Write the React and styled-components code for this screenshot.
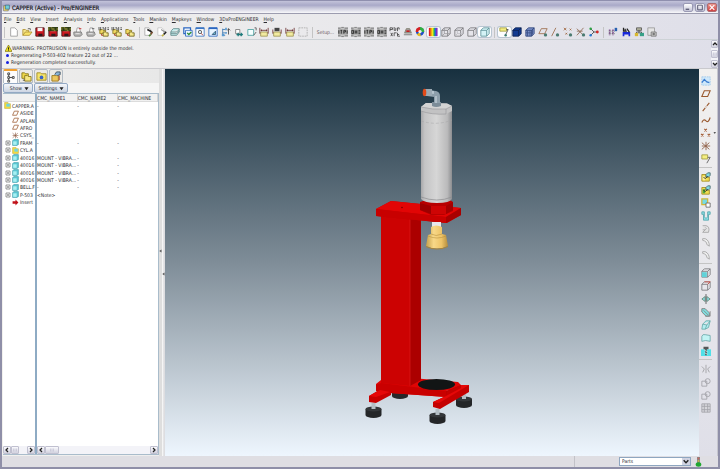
import React, { useState } from 'react'
import styled, { createGlobalStyle } from 'styled-components'


const GlobalStyle = createGlobalStyle`
  * {
    box-sizing: border-box;
  }

  html, body, #root {
    height: 100%;
    margin: 0;
  }

  body, button, select, table {
    font-family: 'DejaVu Sans Condensed', 'Liberation Sans', sans-serif;
    font-size: 5px;
    line-height: 7px;
    color: #2c2c30;
  }

  button {
    margin: 0;
    padding: 0;
    border: 0;
    background: none;
    cursor: pointer;
  }
`;

const Frame = styled.div`
  display: flex;
  flex-direction: column;
  height: 100vh;
  overflow: hidden;
  background: linear-gradient(90deg, #f2f1ee, #dfdfe9);
  border: solid #8f8fa8;
  border-width: 0 2px 2px;
`;

const TitleBar = styled.header`
  display: flex;
  align-items: center;
  flex: none;
  gap: 2px;
  height: 14px;
  padding: 1px 1px 0 1px;
  border-top: 1px solid #8f8fae;
  border-bottom: 1px solid #9c9caf;
  background: linear-gradient(#c3c3da, #a9a9c8 35%, #d0d0e0 65%, #f8f8fb);

  h1 {
    flex: 1;
    margin: 0;
    font-size: 6px;
    line-height: 8px;
    font-weight: 400;
    color: #1c1c26;
    -webkit-text-stroke: 0.2px #1c1c26;
  }
`;

const WindowBtn = styled.button`
  display: flex;
  width: 10px;
  height: 9px;
  border-radius: 2px;
  border: 1px solid ${({ close }) => close ? '#b06a6e' : '#9a9ab4'};
  background: ${({ close }) => close ? 'linear-gradient(#ec9a92, #cf3f3f)' : 'linear-gradient(#fff, #c3c3d6)'};

  svg {
    width: 100%;
    height: 100%;
  }
`;

const MenuBar = styled.nav`
  display: flex;
  flex: none;
  align-items: center;
  gap: 5px;
  height: 11px;
  padding: 0 2px;

  button {
    white-space: nowrap;
  }
`;

const ToolBar = styled.div`
  display: flex;
  flex: none;
  align-items: center;
  gap: 2px;
  height: 15px;
  padding-left: 1px;
  border-bottom: 1px solid #cdd2d6;
`;

const ToolGroup = styled.div`
  display: flex;
  flex-direction: ${({ vertical }) => vertical ? 'column' : 'row'};
  ${({ vertical }) => vertical ? 'height' : 'width'}: ${({ size }) => size}px;
`;

const ToolBtn = styled.button`
  display: flex;
  flex: 1;
  align-items: center;
  justify-content: center;
  min-width: 0;
  min-height: 0;
  border-radius: 2px;
  ${({ active }) => active && `
    background: #fdfdfe;
    box-shadow: 0 0 0 1px #b9c6d2;
  `}

  svg {
    flex: none;
    width: 10px;
    height: 10px;
    overflow: visible;
  }
`;

const Divider = styled.span`
  flex: none;
  width: ${({ vertical }) => vertical ? 'auto' : '1px'};
  height: ${({ vertical }) => vertical ? '1px' : '11px'};
  margin: ${({ vertical }) => vertical ? '2px 0' : '0 1px'};
  background: #c4c4c4;
`;

const SetupBtn = styled.button`
  width: 19px;
  color: #6a5560;
  text-align: center;
`;

const Messages = styled.section`
  display: flex;
  flex: none;
  justify-content: space-between;
  height: 29px;
  border-bottom: 1px solid #c9c9cd;

  ul {
    margin: 0;
    padding: 5px 0 0 3px;
    list-style: none;
  }

  li {
    display: flex;
    align-items: center;
    height: 7px;
    gap: 2px;
    white-space: nowrap;
  }

  li:first-child {
    gap: 0;
  }

  li i {
    width: 3px;
    height: 3px;
    margin-left: 1px;
    border-radius: 50%;
    background: #1620e0;
  }

  li svg {
    width: 7px;
    height: 7px;
  }
`;

const Scroll = styled.div`
  display: flex;
  flex: none;
  flex-direction: ${({ vertical }) => vertical ? 'column' : 'row'};
  justify-content: space-between;
  width: ${({ vertical }) => vertical ? '7px' : 'auto'};
  height: ${({ vertical }) => vertical ? 'auto' : '8px'};
  background: #f3f3f8;
`;

const ScrollBtn = styled.button`
  display: flex;
  align-items: center;
  justify-content: center;
  width: ${({ wide }) => wide ? '14px' : '8px'};
  height: 8px;
  border: 1px solid #c0c0d0;
  border-radius: 1px;
  background: linear-gradient(#fafafd, #d2d2df);

  ${({ narrow }) => narrow && 'width: 7px;'}

  svg {
    flex: none;
    width: 6px;
    height: 6px;
  }
`;

const ScrollStart = styled.div`
  display: flex;
`;

const Main = styled.main`
  display: flex;
  flex: 1;
  min-height: 0;
`;

const Navigator = styled.aside`
  display: flex;
  flex: none;
  flex-direction: column;
  width: 157px;
  padding: 0 0 1px 1px;
`;

const Tabs = styled.div`
  display: flex;
  flex: none;
  height: 14px;
  gap: 1px;
  background: linear-gradient(90deg, #efeeec, #e8e8e8);
`;

const Tab = styled.button`
  display: flex;
  align-items: center;
  justify-content: center;
  width: ${({ active }) => active ? '15px' : '14px'};
  border: 1px solid #b4bcc4;
  border-top: ${({ active }) => active ? '2px solid #f0a030' : '1px solid #b4bcc4'};
  border-bottom: ${({ active }) => active ? '0' : '1px solid #b4bcc4'};
  border-radius: 2px 2px 0 0;
  background: ${({ active }) => active ? '#fdfdfd' : '#eceae6'};

  svg {
    width: 11px;
    height: 11px;
  }
`;

const TreeTools = styled.div`
  display: flex;
  flex: none;
  gap: 1px;
  height: 10px;
  background: #f5f5f5;
`;

const TreeMenuBtn = styled.button`
  display: flex;
  align-items: center;
  justify-content: flex-end;
  gap: 2px;
  width: ${({ wide }) => wide ? '34px' : '30px'};
  padding-right: 3px;
  border: 1px solid #93a9c4;
  border-radius: 2px;
  background: linear-gradient(#f4f6fa, #cdd5e3);

  svg {
    width: 5px;
    height: 5px;
  }
`;

const TreePanes = styled.div`
  display: flex;
  flex: 1;
  min-height: 0;
  background: #fff;
  border: 1px solid #a9bccb;
  border-left: 0;
`;

const Pane = styled.div`
  display: flex;
  flex-direction: column;
  justify-content: space-between;
  flex: ${({ grow }) => grow ? '1' : 'none'};
  width: ${({ grow }) => grow ? 'auto' : '34px'};
  min-width: 0;
  border-right: ${({ grow }) => grow ? '0' : '2px solid #8eabc4'};
`;

const TreeHead = styled.div`
  height: 8px;
  background: #f1f1f1;
  border-bottom: 1px solid #dcdcdc;
`;

const TreeList = styled.ul`
  display: grid;
  grid-auto-rows: 1fr;
  height: 104px;
  margin: 0;
  padding: 0;
  list-style: none;
`;

const TreeRow = styled.li`
  display: flex;
  align-items: center;
  gap: 1px;
  min-height: 0;
  line-height: 6px;
  padding-left: ${({ root }) => root ? '1px' : '2px'};
  white-space: nowrap;

  svg {
    flex: none;
    width: 7px;
    height: 7px;
  }

  svg.toggle {
    width: 6px;
    height: 6px;
  }
`;

const ModelTable = styled.table`
  width: 100%;
  height: 112px;
  table-layout: fixed;
  border-collapse: collapse;

  th {
    height: 8px;
    padding: 0;
    text-align: left;
    font-weight: 400;
    background: #f1f1f1;
    border-right: 1px solid #d4d4d4;
    box-shadow: inset 0 -1px #dcdcdc;
  }

  td {
    padding: 0;
    white-space: nowrap;
    line-height: 6px;
  }
`;

const Splitter = styled.div`
  display: flex;
  flex: none;
  flex-direction: column;
  justify-content: center;
  gap: 19px;
  width: 6px;
  background: linear-gradient(90deg, #dedede 50%, #fafafa 60%, #dddde0 80%);

  svg {
    width: 3px;
    height: 4px;
  }

  svg:last-child {
    align-self: flex-end;
  }
`;

const Viewport = styled.div`
  flex: 1;
  min-width: 0;
  background: linear-gradient(#17303f, #7f8d98 50%, #eef6fe);

  svg {
    display: block;
    width: 100%;
    height: 100%;
  }
`;

const SideBar = styled.div`
  display: flex;
  flex: none;
  flex-direction: column;
  width: 19px;
  padding: 5px 5px 0 0;
  border-right: 1px solid #c6c6ce;
  background: linear-gradient(#f1f0ef, #dfdfe8);
`;

const StatusBar = styled.footer`
  display: flex;
  flex: none;
  align-items: center;
  justify-content: flex-end;
  gap: 4px;
  height: 11px;
  padding-right: 16px;
  background: #dfdee3;

  svg {
    width: 7px;
    height: 10px;
  }
`;

const StatusGap = styled.span`
  width: 41px;
  height: 11px;
  border-left: 1px solid #c2c2c8;
`;

const FilterBox = styled.div`
  position: relative;
  width: 72px;
  height: 9px;

  select {
    display: block;
    width: 100%;
    height: 100%;
    padding: 0 2px;
    appearance: none;
    border: 1px solid #8ea6c0;
    border-radius: 0;
    background: #fff;
  }

  svg {
    position: absolute;
    top: 1px;
    right: 1px;
    width: 8px;
    height: 7px;
    background: #d0d3e2;
    pointer-events: none;
  }
`;


// small drawings, all on a 12 x 12 grid
const cube = (fill, line) => (
  <>
    <path d="M1 4 4 1H11V8L8 11H1Z" fill={fill} />
    <path d="M1 4H8V11H1ZM1 4 4 1H11L8 4M11 1V8L8 11" fill="none" stroke={line} />
  </>
)
const wireCube = (inner) => (
  <g fill="none" stroke="#77777b">
    <path d="M1 4H8V11H1ZM1 4 4 1H11L8 4M11 1V8L8 11" />
    {inner && <path d="M4 1V8H11M4 8 1 11" stroke={inner} />}
  </g>
)
const floppy = (label) => (
  <>
    <path d="M1 1H11V11H1Z" fill="#d01820" stroke="#401014" />
    <path d="M3 1H9V5H3Z" fill="#f4f4f4" />
    <path d="M4 8H9V11H4Z" fill="#30181c" />
    {label && <path d="M0 0H12V5H0Z" fill="#2b3a14" />}
    {label && <path d="M1 0V4M3 1H5V4M7 1V4H9M11 1V4" stroke="#a8a040" fill="none" />}
  </>
)
const printer = (dot) => (
  <>
    <path d="M4 6 5 1H8L9 6" fill="#fff" stroke="#999" />
    <path d="M1 6H10L11 9 9 11H2L1 9Z" fill="#b4b4b2" stroke="#7c7c7c" />
    <path d="M3 8H8" stroke="#eee" />
    <path d="M7 2H10" stroke={dot} />
  </>
)
const copies = (mark) => (
  <>
    <path d="M1 3H4L5 4H8V8H1Z" fill="#f0d860" stroke="#8b7a20" />
    <path d="M5 6H8L9 7H11V11H5Z" fill="#f6e98a" stroke="#6d611e" />
    <path d="M3 8V10H5" stroke="#b13a20" fill="none" />
    {mark && <path d="M0 0V4M2 0V4M4 1H6V4M8 0V4M10 1H12M10 3H12" stroke="#444" fill="none" />}
  </>
)
const shade = (bars) => (
  <>
    <path d="M0 0H12V12H0Z" fill="#c4c4c4" />
    <path d="M0 1.5H3M4 0.500H7M8 1.500H12M0 10.500H3M4 11.500H7M8 10.500H12" stroke="#77777a" />
    <path d="M0 3H12V9H0Z" fill="#a4a4a4" />
    <path d={bars} stroke="#262626" fill="none" />
  </>
)
const crate = (color) => (
  <>
    <path d="M1 3V11H10V6H6V3Z" fill="#f1dc50" stroke="#a08a20" />
    <path d="M2 5H5V10H2Z" fill={color} />
    <path d="M6 3 8 1H11V4L9 6H6Z" fill="#80d8e0" stroke="#49666b" />
    <path d="M3 6 5 8 8 5" fill="none" stroke="#222" />
  </>
)
const layers = (
  <path d="M2 4 4 2H11V6L8 10H1V6ZM1 6H8L11 3M1 8H8L11 5" fill="#c5eeee" stroke="#5f8788" />
)
const steel = 'M1 4V8M3 4H5M4 4V8M7 8V4H9V6H7M11 4V8'
const swatch = 'M1 4V8H3V4H1M5 4V8M5 6H7M7 4V8M9 4H11M9 6H11M9 8H11'

const icons = {
  app: <><path d="M1 2H9V11H1Z" fill="#f2dc60" stroke="#667" /><path d="M4 1H11V8H4Z" fill="#6fcfd8" stroke="#357" /></>,
  fresh: <path d="M2 1H7L10 4V11H2Z" fill="#fff" stroke="#999" />,
  open: <><path d="M1 10V3H4L5 4H8V6" fill="#f4e58a" stroke="#b09030" /><path d="M1 10 4 6H12L9 10Z" fill="#f8e36a" stroke="#b09030" /><path d="M7 2H10V4" stroke="#555" fill="none" /></>,
  save: floppy(false),
  saveCopy: floppy(true),
  print: printer('#c22'),
  printTo: printer('#555'),
  copyMark: copies(true),
  copy: copies(false),
  pen: <><path d="M1 1H6L8 3V10H1Z" fill="#fff" stroke="#aaa" /><path d="M4 3 8 5 10 7" stroke="#222" strokeWidth="2" fill="none" /><path d="M10 6 8 9" stroke="#7a5030" strokeWidth="2" /><path d="M6 11 8 9" stroke="#4a8030" strokeWidth="2" /></>,
  penLight: <><path d="M1 1H6L8 3V10H1Z" fill="#fff" stroke="#c4c4c4" /><path d="M5 3 8 5 11 6" stroke="#999" strokeWidth="1.500" fill="none" /><path d="M11 6 8 9" stroke="#222" strokeWidth="2" /><path d="M6 11 8 9" stroke="#c0b040" strokeWidth="2" /></>,
  layers,
  windowCheck: <><path d="M1 1H9V8H1Z" fill="#fff" stroke="#2b66c0" strokeWidth="1.5" /><path d="M3 4H11V11H3Z" fill="#e7f4ff" stroke="#2b66c0" /><path d="M5 7 7 9 10 6" fill="none" stroke="#2a8a30" strokeWidth="1.5" /></>,
  zoom: <><path d="M1 1H11V11H1Z" fill="#fff" stroke="#3b76c4" /><path d="M1 1.5H11" stroke="#3b76c4" strokeWidth="2" /><circle cx="6" cy="6" r="2" fill="#d8e8f4" stroke="#555" /><path d="M7.5 7.5 9.5 10" stroke="#a33" /></>,
  refit: <><path d="M1 1H11V11H1Z" fill="#e8f4ff" stroke="#2b66c0" /><path d="M1 1.5H11" stroke="#2b66c0" strokeWidth="2" /><path d="M5 9 9 5V9Z" fill="#68b8cc" stroke="#357" /></>,
  treeView: <><path d="M2 2V10M2 3H5M2 7H5M2 10H5" stroke="#4078b0" fill="none" /><path d="M5 1H7V4H5ZM5 6H7V8H5ZM1 8H4V11H1Z" fill="#5a9ad0" /><path d="M9 2V9M8 4 9 2 11 4" stroke="#444" fill="none" /></>,
  orient: <><path d="M2 3H7V8H2Z" fill="#fff" stroke="#777" /><path d="M5 7V11M3 9H10M8 7 10 9 8 11" stroke="#1d7a7a" fill="none" strokeWidth="1.5" /></>,
  newView: <><path d="M1 3H8V10H1Z" fill="#f4ffff" stroke="#4ba0a0" /><path d="M9 1H11V4M11 6 8 10" stroke="#555" fill="none" /></>,
  dimYellow: <><path d="M2 6H10V11H2Z" fill="#f2eba0" stroke="#9e9450" /><path d="M1 1V8M11 1V8M2 4H10M3 3V5M9 3V5" stroke="#6a3030" fill="none" /></>,
  dimMark: <><path d="M3 1H9V5H3Z" fill="#444" /><path d="M2 6H10V11H2Z" fill="#f2eba0" stroke="#9e9450" /><path d="M1 3V8M11 3V8" stroke="#6a3030" /></>,
  dashed: <path d="M1 1H11V11H1Z" fill="none" stroke="#aaa" strokeDasharray="2 1" />,
  steel: shade(steel),
  swatch: shade(swatch),
  pure: <><path d="M0 1V5M0 1H3V3H0M5 0V4H7V1M9 1V5M9 1H11V3M1 7 3 11M3 7 1 11M5 7V11M5 7H8M9 7V11H12M9 9H11" stroke="#444" fill="none" /></>,
  lamp: <><path d="M2 7 4 2H8L10 7Z" fill="#a9a0a0" stroke="#776" /><path d="M4 5H8" stroke="#c02020" strokeWidth="2" /><path d="M1 8H11V10H1Z" fill="#999" /></>,
  wheel: <><circle cx="6" cy="5.5" r="5" fill="#2050c8" /><path d="M6 6V0A5 5 0 0 0 1 6Z" fill="#d82020" /><path d="M6 6H11A5 5 0 0 0 6 0Z" fill="#30b040" /><path d="M6 6 2 9A5 5 0 0 0 7 11Z" fill="#e8c020" /><circle cx="6" cy="5.5" r="2" fill="#f0f0f0" /></>,
  rainbow: <><path d="M1 1H4V11H1Z" fill="#e02020" /><path d="M3 1H6V11H3Z" fill="#f0b010" /><path d="M5 1H8V11H5Z" fill="#f4f020" /><path d="M6.5 1H9V11H6.5Z" fill="#28b850" /><path d="M8 1H10V11H8Z" fill="#2860e8" /><path d="M9.500 1H11.500V11H9.500Z" fill="#8030c0" /></>,
  wire: wireCube('#99999c'),
  hidden: wireCube('#bcbcc0'),
  noHidden: wireCube(null),
  shaded: cube('#d4f3f6', '#5c9098'),
  note: <><path d="M1 1H9V5H1Z" fill="#f4ee80" stroke="#a09a40" /><path d="M9 3H11L8 9" stroke="#444" fill="none" /><circle cx="8" cy="10" r="1.500" fill="#3a7a70" /></>,
  solid: cube('#123a90', '#0c2250'),
  mesh: <>{cube('#7a90c8', '#2c4278')}<path d="M3 4V11M6 4V11M1 7H8M9 3V9" stroke="#3c5288" /></>,
  plane: <path d="M4 2H11L8 9H1Z" fill="none" stroke="#9a5a30" strokeWidth="1.300" />,
  planeOn: <><path d="M4 2H11L8 8H1Z" fill="none" stroke="#9a6a48" /><circle cx="9" cy="9.500" r="2" fill="#4a7a70" /></>,
  axis: <path d="M2 11 10 1" stroke="#9a5a30" strokeWidth="1.300" strokeDasharray="5 1 1 1" />,
  axisOn: <><path d="M2 11 7 1" stroke="#9a6a48" /><circle cx="9" cy="9.500" r="2" fill="#4a7a70" /></>,
  points: <><path d="M4 1 7 4M7 1 4 4M0 7 3 10M3 7 0 10M8 7 11 10M11 7 8 10" stroke="#a05830" strokeWidth="1.300" /><path d="M15 5H18L16.500 7Z" fill="#222" /></>,
  pointsOn: <><path d="M1 1 4 4M4 1 1 4M8 2 10 4M10 2 8 4M3 7 5 9M5 7 3 9" stroke="#a06840" /><circle cx="9" cy="9.500" r="2" fill="#4a7a70" /></>,
  csys: <path d="M1 2 10 10M10 2 1 10M6 1V11M1 6H11" stroke="#8c5a40" />,
  csysOn: <><path d="M1 2 8 9M9 1 1 10M1 5H8" stroke="#8c6850" fill="none" /><circle cx="9" cy="9.500" r="2" fill="#4a7a70" /></>,
  spin: <><path d="M2 2 6 6 2 10M6 6H10" stroke="#444" fill="none" /><circle cx="2" cy="2" r="1.500" fill="#28a040" /><circle cx="10" cy="6" r="1.700" fill="#d02828" /><circle cx="2" cy="10" r="1.500" fill="#2878d0" /></>,
  gears: <><path d="M2 3V10M6 3V10" stroke="#8a5a9a" strokeDasharray="2 1" strokeWidth="2" /><path d="M1 5H8M1 8H8" stroke="#555" strokeDasharray="1 1" /><path d="M8 1H11V5H8Z" fill="#2860b0" /></>,
  manikin: <><path d="M2 6H11V11H9V9H4V11H2Z" fill="#1828d8" /><path d="M3 1V5H7M5 2V5M7 2 10 6" stroke="#222" fill="none" strokeWidth="1.500" /></>,
  network: <><path d="M3 1H9V4H3Z" fill="#b8b8a0" stroke="#555" /><path d="M6 4V8M3 8V6H9V8" stroke="#444" fill="none" /><path d="M1 7H5V11H1Z" fill="#d8b830" /><path d="M7 7H12V11H7Z" fill="#38a088" /></>,
  doc: <><path d="M1 1H9V10H1Z" fill="#e4e4e4" stroke="#999" /><path d="M5 6H11V11H5Z" fill="#c8c8c8" stroke="#777" /><circle cx="8" cy="8.500" r="1.500" fill="#777" /></>,
  sketch: <><path d="M1 1H11V11H1Z" fill="#cfe8fa" stroke="#9cc8ea" strokeDasharray="2 1" /><path d="M1 8 4 4 7 7 10 8" stroke="#3a7cd0" strokeWidth="1.500" fill="none" /></>,
  curve: <path d="M1 9Q3 4 6 7T11 3" stroke="#9a5a30" strokeWidth="1.300" fill="none" />,
  noteTool: <><path d="M1 1H8V6H1Z" fill="#f4ee80" stroke="#a09a40" /><path d="M8 4H11L7 11" stroke="#555" fill="none" /></>,
  crateYellow: crate('#f8ec9a'),
  crateGreen: crate('#50a838'),
  hand: <><path d="M1 1H8V8H1Z" fill="#76dbe2" stroke="#d2b63a" strokeWidth="1.500" /><path d="M6 6H11V11H6Z" fill="#fff" stroke="#666" /></>,
  hole: <path d="M1 1H4V7L6 9 8 7V1H11V4H9V11H3V4H1Z" fill="#8adfe6" stroke="#54a5ac" />,
  ghostShell: <path d="M2 2H6Q11 3 9 10H2L5 7H2M5 7Q8 6 5 4" fill="#e4e4e4" stroke="#a2a2a2" />,
  ghostRound: <path d="M2 2H5Q10 4 10 11L7 9Q7 5 2 4Z" fill="#eee" stroke="#a2a2a2" />,
  extrude: <>{wireCube(null)}<path d="M1 5H7V11H1Z" fill="#60d2d8" /></>,
  cut: <>{wireCube(null)}<path d="M4 1H11L8 4" fill="none" stroke="#d05048" /></>,
  revolve: <><path d="M1 6 5 3V9ZM11 6 7 3V9Z" fill="#8adfe6" stroke="#687" /><path d="M6 0V12" stroke="#555" /></>,
  sweep: <><path d="M1 2H5L10 7V11H6L1 6Z" fill="#80dfe0" stroke="#777" /><path d="M3 4 9 10M11 5V11H5" stroke="#888" fill="none" /></>,
  blend: <path d="M2 5 6 1H11L9 9 5 11H1ZM2 5 7 6 11 1M7 6 5 11" fill="#b2eef0" stroke="#6aa" />,
  surface: <path d="M1 10V4Q2 1 5 2L11 3V10Q5 8 1 10Z" fill="#c2f4f4" stroke="#6aa6a8" />,
  drill: <><path d="M0 4H12V12H0Z" fill="#50e0e8" /><path d="M3 1H9V4H7V11H5V4H3Z" fill="#555" /><path d="M4 5 8 7M4 8 8 10" stroke="#ddd" /></>,
  ghostMirror: <path d="M6 1V11M1 3 4 6 2 10M11 3 8 6 10 10" stroke="#9c9ca0" fill="none" />,
  ghostMerge: <><path d="M1 5H7V11H1Z" stroke="#a0a0a6" fill="none" /><circle cx="8" cy="5" r="3" stroke="#a0a0a6" fill="none" /></>,
  pattern: <path d="M1 1H11V11H1ZM4 1V11M8 1V11M1 4H11M1 8H11" stroke="#a2a2a8" fill="#d7d7dc" />,
  tree: <path d="M3 1H5V3H3ZM3 5H5V7H3ZM3 9H5V11H3ZM8 5H10V7H8ZM4 3V5M4 7V9M5 6H8" fill="#fff" stroke="#444" />,
  folders: <><path d="M1 2H4L5 3H8V8H1Z" fill="#f0d848" stroke="#8c7c20" /><path d="M4 5H7L8 6H11V11H4Z" fill="#f6e680" stroke="#8c7c20" /><path d="M2 10H4" stroke="#444" /></>,
  favorites: <><path d="M1 2H5L6 3H11V10H1Z" fill="#f5e468" stroke="#a48e2c" /><circle cx="6" cy="7" r="2" fill="#3b62c4" /></>,
  connect: <><path d="M1 5H8V11H1Z" fill="#eec860" stroke="#9c7a20" /><path d="M4 4 6 1H10V4L7 5" fill="#8ab4d8" stroke="#456" /><path d="M9 5V10" stroke="#b04428" /></>,
  assembly: <><path d="M1 1H7V3H11V11H1Z" fill="#f2dc40" stroke="#c8b040" /><path d="M4 3H10V8H4Z" fill="#6fd4e0" /></>,
  part: <><path d="M1 3 3 1H11V9L9 11H1Z" fill="#5cc8d4" stroke="#3d98a6" /><path d="M2 4H8V10H2Z" fill="#a8f0f2" /></>,
  insert: <path d="M1 4H6V1L11 6 6 11V8H1Z" fill="#c01018" />,
  warning: <><path d="M6 0 12 11H0Z" fill="#f0e020" stroke="#6c6400" /><path d="M6 4V8M6 9V10" stroke="#111" strokeWidth="1.500" /></>,
  plus: <path d="M2 2H10V10H2ZM4 6H8M6 4V8" fill="#fff" stroke="#777" strokeWidth="1.500" />,
  left: <path d="M8 2 4 6 8 10" fill="none" stroke="#222" strokeWidth="2.500" />,
  right: <path d="M4 2 8 6 4 10" fill="none" stroke="#222" strokeWidth="2.500" />,
  up: <path d="M2 8 6 4 10 8" fill="none" stroke="#222" strokeWidth="2.500" />,
  down: <path d="M2 4 6 8 10 4" fill="none" stroke="#222" strokeWidth="2.500" />,
  grip: <path d="M3 3V9M6 3V9M9 3V9" stroke="#b4b4c8" />,
  caret: <path d="M1 3H11L6 10Z" fill="#222" />,
  arrow: <path d="M10 0V12L1 6Z" fill="#555" />,
  minimize: <path d="M2 9H8" stroke="#4c4c68" strokeWidth="2" />,
  maximize: <path d="M2 2H10V10H2Z" fill="none" stroke="#4c4c68" strokeWidth="1.500" />,
  close: <path d="M2 2 10 10M10 2 2 10" stroke="#fff" strokeWidth="2" />,
}

const Icon = ({ name, className }) => (
  <svg viewBox="0 0 12 12" className={className} aria-hidden="true">{icons[name]}</svg>
)


const menus = ['File', 'Edit', 'View', 'Insert', 'Analysis', 'Info', 'Applications', 'Tools', 'Manikin', 'Mapkeys', 'Window', '3DxProENGINEER', 'Help']

const fileTools = ['fresh', 'open', 'save', 'saveCopy', 'saveCopy', 'print', 'printTo', 'copyMark', 'copyMark', 'copy']
const viewTools = ['pen', 'penLight', 'layers', 'windowCheck', 'zoom', 'refit', 'treeView', 'orient', 'newView', 'dimYellow', 'dimMark', 'dimYellow', 'dashed']
const shadeTools = ['steel', 'swatch', 'steel', 'swatch', 'pure', 'lamp', 'wheel', 'rainbow', 'wire', 'hidden', 'noHidden', 'shaded']
const datumTools = ['note', 'solid', 'mesh', 'planeOn', 'axisOn', 'pointsOn', 'csysOn', 'spin']
const extraTools = ['gears', 'manikin', 'network', 'doc']

const sideTools = [
  { size: 91, names: ['sketch', 'plane', 'axis', 'curve', 'points', 'csys', 'noteTool'] },
  { size: 91, names: ['crateYellow', 'crateGreen', 'hand', 'hole', 'ghostShell', 'ghostRound', 'ghostRound'] },
  { size: 91, names: ['extrude', 'cut', 'revolve', 'sweep', 'blend', 'surface', 'drill'] },
  { size: 52, names: ['ghostMirror', 'ghostMerge', 'ghostMerge', 'pattern'] },
]

const rows = [
  { icon: 'assembly', label: 'CAPPER.A', root: true, cells: ['-', '-', '-'] },
  { icon: 'plane', label: 'ASIDE', cells: [] },
  { icon: 'plane', label: 'APLAN', cells: [] },
  { icon: 'plane', label: 'AFRO', cells: [] },
  { icon: 'csys', label: 'CSYS_', cells: [] },
  { icon: 'part', label: 'FRAM', open: true, cells: ['-', '-', '-'] },
  { icon: 'assembly', label: 'CYL.A', open: true, cells: [] },
  { icon: 'part', label: '40016', open: true, cells: ['MOUNT - VIBRA...', '-', '-'] },
  { icon: 'part', label: '40016', open: true, cells: ['MOUNT - VIBRA...', '-', '-'] },
  { icon: 'part', label: '40016', open: true, cells: ['MOUNT - VIBRA...', '-', '-'] },
  { icon: 'part', label: '40016', open: true, cells: ['MOUNT - VIBRA...', '-', '-'] },
  { icon: 'part', label: 'BELL.F', open: true, cells: ['-', '-', '-'] },
  { icon: 'part', label: 'P-503', open: true, cells: ['<Note>'] },
  { icon: 'insert', label: 'Insert', cells: [] },
]


const Tools = ({ names, size, vertical, active = [] }) => (
  <ToolGroup size={size} vertical={vertical}>
    {names.map((name, i) => (
      <ToolBtn key={i} active={active.includes(name)} aria-label={name}>
        <Icon name={name} />
      </ToolBtn>
    ))}
  </ToolGroup>
)

const HScroll = ({ wide }) => (
  <Scroll>
    <ScrollStart>
      <ScrollBtn aria-label="left"><Icon name="left" /></ScrollBtn>
      <ScrollBtn wide={wide} aria-label="thumb"><Icon name="grip" /></ScrollBtn>
    </ScrollStart>
    <ScrollBtn aria-label="right"><Icon name="right" /></ScrollBtn>
  </Scroll>
)

const Foot = ({ x, y }) => (
  <g>
    <path d={`M${x - 8} ${y - 2}v6a8 3 0 0 0 16 0v-6z`} fill="#242628" />
    <ellipse cx={x} cy={y - 2} rx="8" ry="2.500" fill="#34373a" />
    <path d={`M${x - 2} ${y - 8}h4v6h-4z`} fill="#b4bec5" />
  </g>
)

const CapperModel = () => (
  <svg viewBox="165 69 534 387" role="img" aria-label="CAPPER">
    <defs>
      <linearGradient id="barrel">
        <stop offset="0" stopColor="#a8a8aa" />
        <stop offset="0.12" stopColor="#c4c4c5" />
        <stop offset="0.5" stopColor="#d6d6d6" />
        <stop offset="0.85" stopColor="#bababb" />
        <stop offset="1" stopColor="#8c8d90" />
      </linearGradient>
      <linearGradient id="bell">
        <stop offset="0" stopColor="#c6a04a" />
        <stop offset="0.35" stopColor="#f8d888" />
        <stop offset="0.7" stopColor="#eec468" />
        <stop offset="1" stopColor="#b48c3c" />
      </linearGradient>
    </defs>

    {/* base */}
    <path d="M392 391V396A8 3 0 0 0 408 396V391Z" fill="#26282a" />
    <Foot x={464} y={401} />
    <Foot x={373.5} y={411} />
    <Foot x={437.5} y={417} />
    <path d="M376 384 381 380 412 378 458 382 461 385V388L446 391V397L390 393 376 390Z" fill="#e00505" />
    <path d="M376 385 381 383 446 391V397L390 393 376 391Z" fill="#c90000" />
    <path d="M446 391 461 385V391L446 397Z" fill="#bc0000" />
    <path d="M369 396 379 390 391 392V395L376 403 369 402Z" fill="#c80000" />
    <path d="M369 396 380 390 390 392 376 397Z" fill="#e60808" />
    <path d="M433 402 446 396 447 392 461 385H469V392L440 409 433 407Z" fill="#c50000" />
    <path d="M433 402 446 396 461 388V385H469L439 403Z" fill="#e60808" />
    <ellipse cx="436.500" cy="384.500" rx="18.500" ry="5.500" fill="#121515" />

    {/* column */}
    <path d="M381 212H411V386L381 383Z" fill="#cc0202" />
    <path d="M410 214H421V380L410 386Z" fill="#ab0000" />
    <path d="M410 216V386" stroke="#e02020" strokeWidth="0.600" />

    {/* top plate */}
    <path d="M376 209 391 201 461 208V215L447 223 376 216Z" fill="#c60000" />
    <path d="M376 209 391 201 461 208 446 217Z" fill="#e20505" />
    <path d="M376 209 446 217V223L376 216Z" fill="#c80000" />
    <path d="M446 217 461 208V215L446 223Z" fill="#a80000" />
    <circle cx="402" cy="207.500" r="0.800" fill="#700" />

    {/* bell */}
    <path d="M432 222H441V228H432Z" fill="#e8e8ec" />
    <path d="M431 227Q436 224 442 227V234L446 235 448 246Q437 251 426 246L428 235 431 234Z" fill="url(#bell)" />
    <path d="M428 236Q437 240 446 236M431 234Q436 237 442 234" fill="none" stroke="#b9923f" strokeWidth="0.600" />
    <path d="M426 246Q437 251 448 246V247Q437 252 426 247Z" fill="#a8843a" />

    {/* clamp */}
    <path d="M420 202 426 200H450L453 202V211L444 215H431L420 210Z" fill="#b80000" />
    <path d="M420 203 431 206V214L420 210Z" fill="#9c0000" />
    <path d="M431 206H446V214H431Z" fill="#ce0404" />
    <path d="M446 206 453 202V210L446 214Z" fill="#a40000" />

    {/* cylinder */}
    <path d="M421 107H452V199Q450 203 437 203T421 199Z" fill="url(#barrel)" />
    <path d="M421 107 426 103 447 103.500 452 106V111L446 114Q432 115 421 111Z" fill="#c2c2c3" />
    <path d="M421 107 426 103 447 103.500 452 106 446 109Q440 110 421 107Z" fill="#d3d3d3" />
    <path d="M421 107Q432 110 446 109L452 106M421 111Q432 115 446 114V109" fill="none" stroke="#959698" strokeWidth="0.600" />
    <path d="M421 121Q437 126 452 120" fill="none" stroke="#a4a5a6" strokeWidth="0.500" strokeDasharray="3 2" />
    <path d="M421 197Q437 203 452 197" fill="none" stroke="#8e8e90" strokeWidth="0.700" />

    {/* fitting */}
    <path d="M432 102H441V106Q436 108 432 106Z" fill="#7c8c98" />
    <path d="M434 103V97L427 96V90L436 91Q440 92 440 96V103Z" fill="#8e9fab" />
    <path d="M427 90 434 91V94L427 93Z" fill="#b6c4ce" />
    <path d="M435 96H437V103H435Z" fill="#b0bec8" />
    <path d="M424 89H432V96H424Z" fill="#9caab4" />
    <ellipse cx="424.500" cy="92.500" rx="1.800" ry="3.800" fill="#e24a18" />
  </svg>
)


const App = () => {
  const [filter, setFilter] = useState('Parts')

  return (
    <>
      <GlobalStyle />
      <Frame>
        <TitleBar>
          <svg width="7" height="8" viewBox="0 0 12 12">{icons.app}</svg>
          <h1>CAPPER (Active) - Pro/ENGINEER</h1>
          <WindowBtn aria-label="Minimize"><Icon name="minimize" /></WindowBtn>
          <WindowBtn aria-label="Maximize"><Icon name="maximize" /></WindowBtn>
          <WindowBtn close aria-label="Close"><Icon name="close" /></WindowBtn>
        </TitleBar>

        <MenuBar>
          {menus.map((menu) => (
            <button key={menu}><u>{menu[0]}</u>{menu.slice(1)}</button>
          ))}
        </MenuBar>

        <ToolBar>
          <Divider />
          <Tools names={fileTools} size={128} />
          <Divider />
          <Tools names={viewTools} size={166} />
          <Divider />
          <SetupBtn>Setup...</SetupBtn>
          <Tools names={shadeTools} size={154} active={['rainbow', 'shaded']} />
          <Divider />
          <Tools names={datumTools} size={102} active={['note']} />
          <Divider />
          <Tools names={extraTools} size={51} />
        </ToolBar>

        <Messages>
          <ul>
            <li><Icon name="warning" />WARNING: PROTRUSION is entirely outside the model.</li>
            <li><i />Regenerating P-503-402 feature 22 out of 22 ...</li>
            <li><i />Regeneration completed successfully.</li>
          </ul>
          <Scroll vertical>
            <ScrollBtn narrow aria-label="up"><Icon name="up" /></ScrollBtn>
            <ScrollBtn narrow aria-label="thumb"><Icon name="grip" /></ScrollBtn>
            <ScrollBtn narrow aria-label="down"><Icon name="down" /></ScrollBtn>
          </Scroll>
        </Messages>

        <Main>
          <Navigator>
            <Tabs>
              <Tab active aria-label="Model tree"><Icon name="tree" /></Tab>
              <Tab aria-label="Folders"><Icon name="folders" /></Tab>
              <Tab aria-label="Favorites"><Icon name="favorites" /></Tab>
              <Tab aria-label="Connections"><Icon name="connect" /></Tab>
            </Tabs>
            <TreeTools>
              <TreeMenuBtn>Show<Icon name="caret" /></TreeMenuBtn>
              <TreeMenuBtn wide>Settings<Icon name="caret" /></TreeMenuBtn>
            </TreeTools>
            <TreePanes>
              <Pane>
                <div>
                  <TreeHead />
                  <TreeList>
                    {rows.map((row, i) => (
                      <TreeRow key={i} root={row.root}>
                        {!row.root && <Icon name={row.open ? 'plus' : ''} className="toggle" />}
                        <Icon name={row.icon} />
                        {row.label}
                      </TreeRow>
                    ))}
                  </TreeList>
                </div>
                <HScroll />
              </Pane>
              <Pane grow>
                <ModelTable>
                  <thead>
                    <tr><th>CMC_NAME1</th><th>CMC_NAME2</th><th>CMC_MACHINE</th></tr>
                  </thead>
                  <tbody>
                    {rows.map((row, i) => (
                      <tr key={i}>
                        {[0, 1, 2].map((n) => <td key={n}>{row.cells[n] || '\u00a0'}</td>)}
                      </tr>
                    ))}
                  </tbody>
                </ModelTable>
                <HScroll wide />
              </Pane>
            </TreePanes>
          </Navigator>

          <Splitter>
            <Icon name="arrow" />
            <Icon name="arrow" />
          </Splitter>

          <Viewport>
            <CapperModel />
          </Viewport>

          <SideBar>
            {sideTools.map((group, i) => (
              <React.Fragment key={i}>
                {i > 0 && <Divider vertical />}
                <Tools vertical names={group.names} size={group.size} />
              </React.Fragment>
            ))}
          </SideBar>
        </Main>

        <StatusBar>
          <StatusGap />
          <FilterBox>
            <select aria-label="Filter" value={filter} onChange={(e) => setFilter(e.target.value)}>
              <option>Parts</option>
              <option>Features</option>
              <option>Geometry</option>
            </select>
            <Icon name="down" />
          </FilterBox>
          <svg viewBox="0 0 7 10">
            <path d="M2 0H5V6H2Z" fill="#888" />
            <circle cx="3.500" cy="1.500" r="1" fill="#c86860" />
            <circle cx="3.500" cy="4" r="1" fill="#c8b850" />
            <ellipse cx="3.500" cy="7.500" rx="2.800" ry="2.200" fill="#20a830" />
          </svg>
        </StatusBar>
      </Frame>
    </>
  )
}

export default App
